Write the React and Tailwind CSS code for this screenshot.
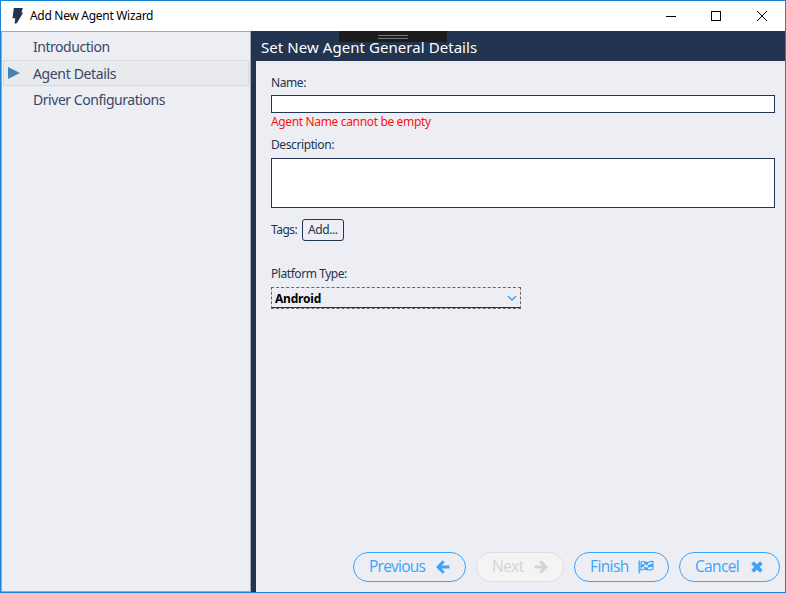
const Label = ({ className = "", children }) => (
  <div className={"h-4 whitespace-nowrap text-[12px] leading-4 text-[#22344f] " + className}>{children}</div>
);

const ArrowIcon = ({ className = "" }) => (
  <svg className={"h-[14px] w-[14px] shrink-0 " + className} viewBox="0 0 14 14" fill="none" stroke="currentColor" strokeWidth="2.9">
    <path d="M7.7 1.2L2 7L7.7 12.8M2.2 7H13.4" />
  </svg>
);

const FlagIcon = () => (
  <svg className="h-[14px] w-4 shrink-0" viewBox="0 0 16 14" fill="none" stroke="currentColor">
    <path d="M1.2 0.5V13.5" strokeWidth="1.3" />
    <path d="M3 2C6 .2 8 3.4 10.5 2.2C12.4 1.3 13.5 1.4 14.9 1.4V9.3C13.5 9.2 12 10.5 10 9.9C7.5 9.2 6 8.5 3 10.2Z" strokeWidth="1.1" />
    <path fill="currentColor" stroke="none" d="M3 4.6C4.6 3.8 5.4 3.9 6.3 4V1.7C7.5 2 8.5 2.9 9.9 2.5V5C11.8 4.7 13 3.6 15 3.7V6.6C13.4 6.5 12 7.6 9.9 7.4V5C8.5 5.1 7.5 4.4 6.3 4V6.8C5 6.5 4.5 6.8 3 7.4ZM6.3 6.8C7.6 7 8.5 7.5 9.9 7.4V10C8.5 9.7 7.5 9 6.3 9.1Z" />
  </svg>
);

const CrossIcon = () => (
  <svg className="h-3 w-3 shrink-0" viewBox="0 0 12 12" fill="none" stroke="currentColor" strokeWidth="3.7">
    <path d="M1.6 1.6L10.4 10.4M10.4 1.6L1.6 10.4" />
  </svg>
);

function TitleBar() {
  return (
    <header className="flex h-[30px] shrink-0 items-center bg-white">
      <svg className="ml-[11px] h-4 w-3 shrink-0" viewBox="0 0 12 16" fill="#22344f">
        <path d="M1.8 0H10.9L9.4 4.6H11.2L5 15L2.6 15.8L3.2 10.2H.5Z" />
      </svg>
      <h1 className="ml-[6px] whitespace-nowrap text-[12px] leading-4 tracking-[-0.3px] text-black">Add New Agent Wizard</h1>
      <svg className="ml-auto mr-[17px] h-[11px] w-[103px]" viewBox="0 0 103 11" fill="none" stroke="black">
        <path d="M1 5.5H11M46.5 .5H55.5V9.5H46.5Z" shapeRendering="crispEdges" />
        <path d="M92 0L102 10M102 0L92 10" />
      </svg>
    </header>
  );
}

function Sidebar() {
  return (
    <nav className="flex w-[250px] shrink-0 flex-col border border-[#a5a7ad] px-px pt-[2px] text-[14px] text-[#3a4765]">
      <div className="flex h-[26px] items-center pb-[2px] pl-[30px] tracking-[-0.46px]">Introduction</div>
      <div className="flex h-[26px] items-center border border-[#d9dadd] bg-[#e8eaed]">
        <svg className="ml-1 h-3 w-3 shrink-0" viewBox="0 0 12 12"><path d="M0 0L12 6L0 12Z" fill="#4682b4" /></svg>
        <span className="ml-[13px] whitespace-nowrap tracking-[-0.36px]">Agent Details</span>
      </div>
      <div className="flex h-[26px] items-center pl-[30px] tracking-[-0.46px]">Driver Configurations</div>
    </nav>
  );
}

function WizardButton({ className, textClass, label, children }) {
  return (
    <button className={"flex h-[30px] shrink-0 items-center rounded-full border pb-px pl-[15px] text-[15.5px] " + className}>
      <span className={"whitespace-nowrap text-left font-['Open_Sans'] " + textClass}>{label}</span>
      {children}
    </button>
  );
}

export default function App() {
  return (
    <div className="relative flex h-[593px] w-[786px] flex-col overflow-hidden border border-[#1883d7] bg-[#edeef4] font-['Noto_Sans','Open_Sans',sans-serif]">
      <TitleBar />
      <main className="flex min-h-0 flex-1">
        <Sidebar />
        <section className="flex min-w-0 flex-1 flex-col border-l-[5px] border-[#22344f]">
          <div className="relative flex h-[30px] shrink-0 items-center bg-[#22344f] pl-[5px]">
            <div className="absolute left-[83px] top-0 flex h-[11px] w-[108px] flex-col items-center gap-[2px] bg-[#1c1c1c] pt-1">
              <div className="h-px w-[30px] bg-[#777]" />
              <div className="h-px w-[30px] bg-[#777]" />
            </div>
            <h2 className="relative mt-px whitespace-nowrap text-[15px] leading-5 tracking-[0.06px] text-white">Set New Agent General Details</h2>
          </div>
          <div className="flex flex-1 flex-col px-[15px] pb-[10px] pr-[10px] pt-[14px]">
            <Label className="tracking-[-0.4px]">Name:</Label>
            <input aria-label="Name" className="mt-1 h-[18px] w-full border border-[#22344f] bg-white px-1 text-[12px] outline-none" />
            <div className="mt-[1px] h-4 text-[12px] leading-4 tracking-[-0.35px] text-[#ff1010]">Agent Name cannot be empty</div>
            <Label className="mt-[7px] tracking-[-0.4px]">Description:</Label>
            <textarea aria-label="Description" className="mt-[5px] h-[50px] w-full resize-none border border-[#22344f] bg-white outline-none" />
            <div className="mt-[11px] flex items-center">
              <Label className="w-[31px] tracking-[-0.5px]">Tags:</Label>
              <button className="h-[22px] w-[42px] whitespace-nowrap rounded-[3px] border border-[#22344f] pl-[5px] text-left text-[12px] leading-5 tracking-[-0.4px] text-[#22344f]">Add...</button>
            </div>
            <Label className="mt-[25px] tracking-[-0.44px]">Platform Type:</Label>
            <div className="relative mt-[5px] flex h-[22px] w-[250px] items-center border border-dashed border-[#666] pl-[3px] text-[12px] font-bold text-black">
              <span className="mt-[2px] tracking-[-0.2px]">Android</span>
              <svg className="ml-auto mr-[3px] h-[7px] w-[10px]" viewBox="0 0 10 7" fill="none" stroke="#3ba3f8" strokeWidth="1.5"><path d="M1 1L5 5L9 1" /></svg>
              <div className="absolute inset-x-0 bottom-0 h-px bg-[#22344f]" />
            </div>
          </div>
          <footer className="flex h-[40px] shrink-0 items-start justify-end gap-[10px] pr-[5px]">
            <WizardButton className="w-[113px] border-[#3ba3f8] text-[#3ba3f8]" textClass="w-[67px] tracking-[-0.75px]" label="Previous"><ArrowIcon /></WizardButton>
            <WizardButton className="w-[88px] border-[#dddee1] bg-[#f4f4f5] text-[#d3d3d3]" textClass="w-[42px] tracking-[-0.6px]" label="Next"><ArrowIcon className="rotate-180" /></WizardButton>
            <WizardButton className="w-[95px] border-[#3ba3f8] text-[#3ba3f8]" textClass="w-[48px] tracking-[-0.6px]" label="Finish"><FlagIcon /></WizardButton>
            <WizardButton className="w-[101px] border-[#3ba3f8] text-[#3ba3f8]" textClass="w-[56px] tracking-[-0.65px]" label="Cancel"><CrossIcon /></WizardButton>
          </footer>
        </section>
      </main>
      <div className="absolute -left-px -top-px h-1 w-1 bg-white" />
      <div className="absolute -right-px -top-px h-1 w-1 bg-white" />
      <div className="absolute -bottom-px -left-px h-1 w-px bg-white" />
      <div className="absolute -bottom-px -left-px h-px w-1 bg-white" />
      <div className="absolute -bottom-px -right-px h-1 w-px bg-white" />
      <div className="absolute -bottom-px -right-px h-px w-1 bg-white" />
    </div>
  );
}
